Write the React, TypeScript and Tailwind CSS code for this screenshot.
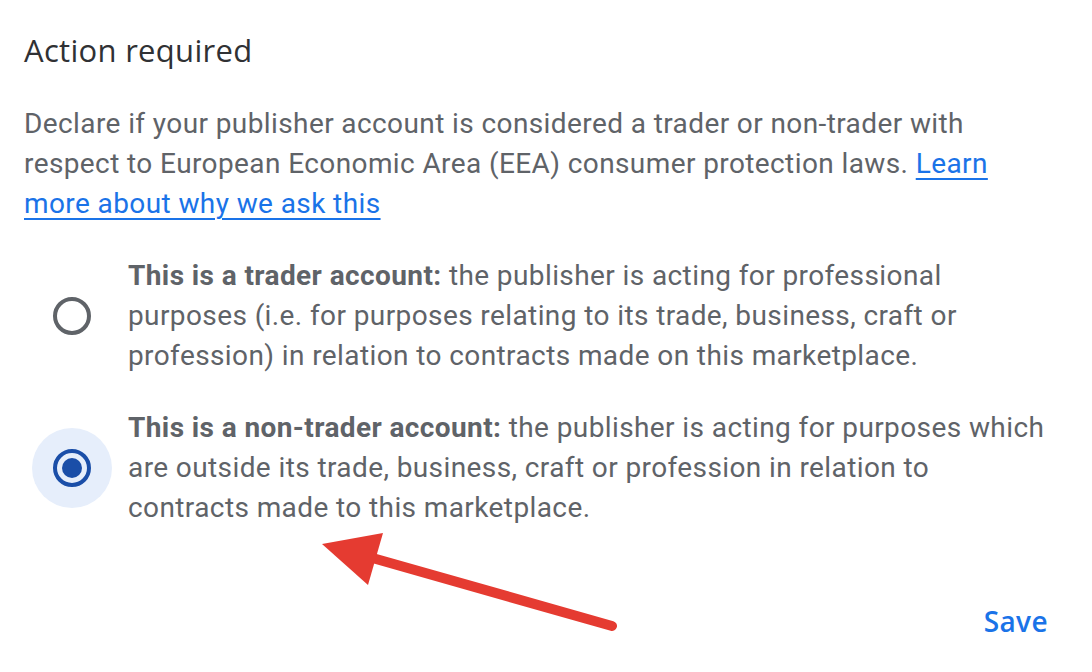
export default function App() {
  return (
    <div className="relative h-[672px] w-[1092px] overflow-hidden bg-white font-['Roboto',sans-serif]">
      <div className="px-6 pt-[29px]">
        <h2 className="text-[31px] font-medium leading-[42px] tracking-[0.3px] text-[#303134] font-['Open_Sans',sans-serif]">
          Action required
        </h2>
        <p className="mt-[33px] w-[990px] text-[28px] leading-[40px] tracking-[0.4px] text-[#5f6368]">
          Declare if your publisher account is considered a trader or non-trader with
          respect to European Economic Area (EEA) consumer protection laws.{" "}
          <a href="#" className="text-[#1a73e8] underline underline-offset-[5px] decoration-[2px]">
            Learn more about why we ask this
          </a>
        </p>

        <div className="mt-[32px] flex flex-col gap-[32px]">
          <label className="flex items-center">
            <span className="ml-[8px] flex h-[80px] w-[80px] shrink-0 items-center justify-center rounded-full">
              <span className="h-[38px] w-[38px] rounded-full border-[4px] border-[#5f6368]" />
            </span>
            <span className="ml-[16px] w-[922px] text-[28px] leading-[40px] tracking-[0.4px] text-[#5f6368]">
              <b className="font-bold">This is a trader account:</b> the publisher is acting for professional
              purposes (i.e. for purposes relating to its trade, business, craft or
              profession) in relation to contracts made on this marketplace.
            </span>
          </label>
          <label className="flex items-center">
            <span className="ml-[8px] flex h-[80px] w-[80px] shrink-0 items-center justify-center rounded-full bg-[#e6eefb]">
              <span className="flex h-[38px] w-[38px] items-center justify-center rounded-full border-[4px] border-[#1a4ea8]">
                <span className="h-[20px] w-[20px] rounded-full bg-[#1a4ea8]" />
              </span>
            </span>
            <span className="ml-[16px] w-[922px] text-[28px] leading-[40px] tracking-[0.4px] text-[#5f6368]">
              <b className="font-bold">This is a non-trader account:</b> the publisher is acting for purposes which
              are outside its trade, business, craft or profession in relation to
              contracts made to this marketplace.
            </span>
          </label>
        </div>

        <div className="mt-[72px] flex justify-end pr-[20px]">
          <button className="text-[28px] font-semibold tracking-[0.4px] text-[#1a73e8] font-['Open_Sans',sans-serif]">Save</button>
        </div>
      </div>

      <svg className="absolute left-0 top-0" width="1092" height="672" viewBox="0 0 1092 672">
        <line x1="612" y1="626" x2="362" y2="555" stroke="#e53b31" strokeWidth="10" strokeLinecap="round" />
        <polygon points="322,544 383,533 368,585" fill="#e53b31" />
      </svg>
    </div>
  );
}
